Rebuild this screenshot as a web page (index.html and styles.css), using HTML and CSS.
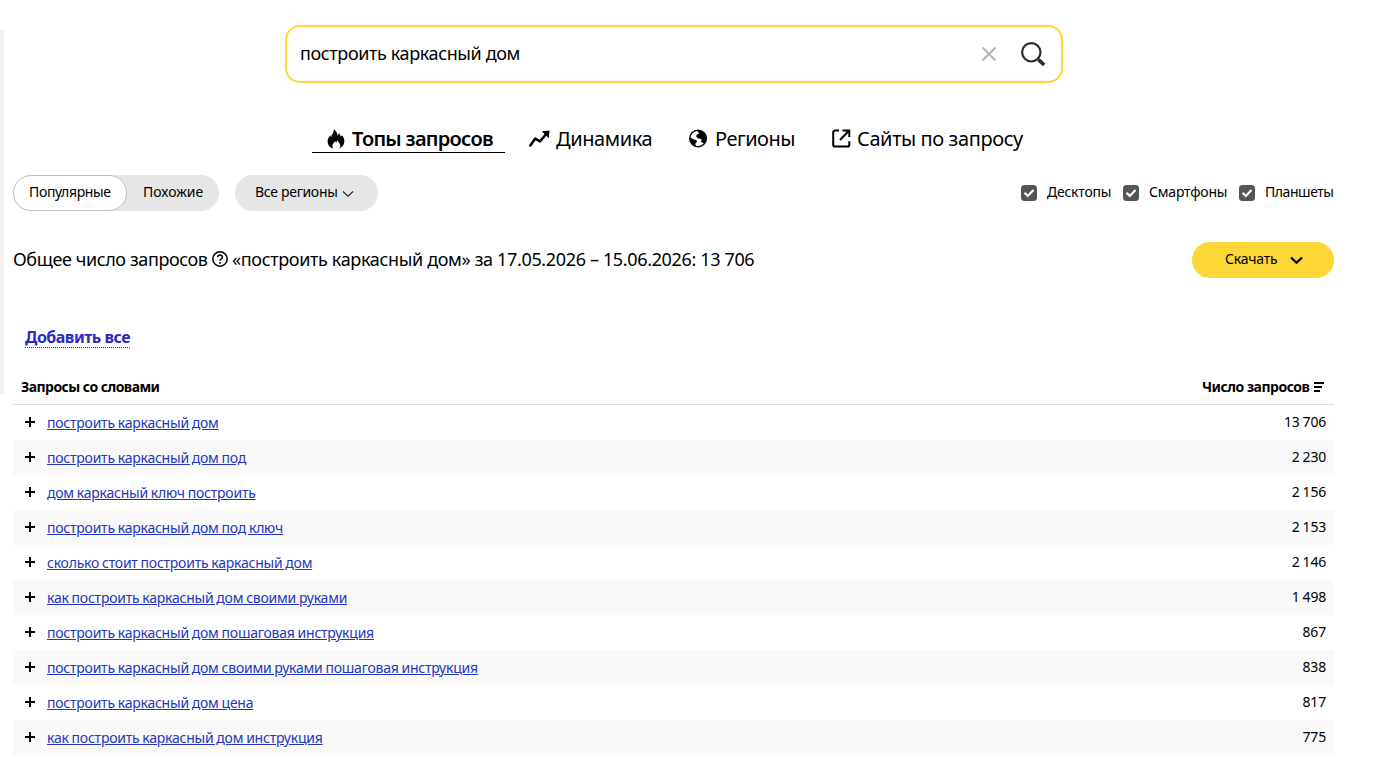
FILE: index.html
```
<!DOCTYPE html>
<html lang="ru">
<head>
<meta charset="utf-8">
<title>Вордстат</title>
<link rel="stylesheet" href="styles.css">
</head>
<body>
<div class="rail"></div>
<main class="page">
  <div class="search">
    <span class="search-text">построить каркасный дом</span>
    <svg class="search-clear" width="16" height="16" viewBox="0 0 16 16"><path d="M1.500 1.500l13 13M14.500 1.500l-13 13" fill="none" stroke="#b3b3b3" stroke-width="1.800"/></svg>
    <svg class="search-icon" width="26" height="26" viewBox="0 0 26 26"><circle cx="11.300" cy="11.300" r="9.200" fill="none" stroke="#2b2b2b" stroke-width="2.200"/><path d="M18.400 18.600l5.800 5.400" stroke="#2b2b2b" stroke-width="3.600"/></svg>
  </div>

  <nav class="tabs">
    <span class="tab tab-active">
      <svg class="tab-icon" width="18" height="20" viewBox="0 0 18 20"><path d="M6.800 0C8.500 1.500 10.300 3.500 10.500 6.600C11.300 6 11.700 5 11.600 4C13 5 13.400 6.200 13.500 7.500C14.200 7.300 14.700 6.800 15 6.200C16.700 8 17.500 10 17.300 12.500C17.200 15.800 15.300 18.300 12.300 19.500C13.300 18.500 13.600 17.200 13.200 15.700C12.700 14 11 13.200 10.500 11C9.800 12 9.500 12.700 9.500 13.700C8.900 13.400 8.600 12.900 8.600 12.300C6.300 13.700 4.500 16.500 6 19.500C2.700 18.500.6 15.800.6 12.300C.6 9.500 2 7.800 3.500 6.200C3.500 7.100 3.700 7.700 4.400 8.200C4.400 5 7.200 3.600 6.800 0Z"/></svg>
      <span class="tab-label label-tops">Топы запросов</span>
    </span>
    <span class="tab">
      <svg class="tab-icon" width="21" height="18" viewBox="0 0 21 18"><path d="M1.300 15.600L6.300 8.600L11 11.400L17 4.300" fill="none" stroke="#000" stroke-width="2.500" stroke-linecap="round" stroke-linejoin="round"/><path d="M12.800 1.300L20.500.5L19.800 8.200Z"/></svg>
      <span class="tab-label label-dyn">Динамика</span>
    </span>
    <span class="tab">
      <svg class="tab-icon globe" width="19" height="19" viewBox="0 0 19 19"><circle cx="9" cy="9.500" r="8.300" fill="#fff" stroke="#000" stroke-width="1.400"/><path d="M7.500 1.300C11 .3 15 2 17 5.200C18.200 8 18 11 16.300 13.500L14.300 14.200L12 12.800L12.600 10.200L9.500 9.600L7.200 7.800L7.700 5.600L9.900 4.700L9.200 3Z"/><path d="M.9 8.200L4 10.200L7.500 11.300L8 13L6.400 14.300L6.700 16.600L5 16.700C2.300 15 .5 12 .9 8.200Z"/></svg>
      <span class="tab-label label-reg">Регионы</span>
    </span>
    <span class="tab">
      <svg class="tab-icon globe" width="19" height="19" viewBox="0 0 19 19"><path d="M7 1.500H3A1.800 1.800 0 0 0 1.200 3.300V15.700A1.800 1.800 0 0 0 3 17.500H15.500A1.800 1.800 0 0 0 17.300 15.700V12.300M10.500 1.500H17.300V8M17 1.800L8 11" fill="none" stroke="#000" stroke-width="2"/></svg>
      <span class="tab-label label-sites">Сайты по запросу</span>
    </span>
  </nav>

  <div class="filters">
    <div class="segmented">
      <span class="segment segment-on"><span class="t-pop">Популярные</span></span>
      <span class="segment"><span class="t-sim">Похожие</span></span>
    </div>
    <div class="region"><span class="t-region">Все регионы</span>
      <svg width="12" height="8" viewBox="0 0 12 8"><path d="M1 1.500l5 4.700l5-4.700" fill="none" stroke="#222" stroke-width="1.200"/></svg>
    </div>
    <div class="devices">
      <span class="device"><svg class="check" width="16" height="16" viewBox="0 0 16 16"><rect width="16" height="16" rx="3.500" fill="#555"/><path d="M3.500 7.700l3.300 3.200l5.700-6" fill="none" stroke="#fff" stroke-width="2.200"/></svg><span class="t-desk">Десктопы</span></span>
      <span class="device"><svg class="check" width="16" height="16" viewBox="0 0 16 16"><rect width="16" height="16" rx="3.500" fill="#555"/><path d="M3.500 7.700l3.300 3.200l5.700-6" fill="none" stroke="#fff" stroke-width="2.200"/></svg><span class="t-phone">Смартфоны</span></span>
      <span class="device"><svg class="check" width="16" height="16" viewBox="0 0 16 16"><rect width="16" height="16" rx="3.500" fill="#555"/><path d="M3.500 7.700l3.300 3.200l5.700-6" fill="none" stroke="#fff" stroke-width="2.200"/></svg><span class="t-tab">Планшеты</span></span>
    </div>
  </div>

  <div class="summary">
    <div class="total">
      <span class="t-total">Общее число запросов</span>
      <svg class="help" width="16" height="16" viewBox="0 0 16 16"><circle cx="8" cy="8" r="7.200" fill="none" stroke="#000" stroke-width="1.500"/><path d="M5.600 6.300C5.700 3.300 10.400 3.400 10.400 6.100C10.400 7.900 8 7.700 8 9.700" fill="none" stroke="#000" stroke-width="1.500"/><circle cx="8" cy="11.900" r="1"/></svg>
      <span class="t-phrase">«построить каркасный дом» за 17.05.2026 – 15.06.2026: 13 706</span>
    </div>
    <div class="download"><span class="t-dl">Скачать</span>
      <svg width="13" height="9" viewBox="0 0 13 9"><path d="M1 1.500l5.500 5.300L12 1.500" fill="none" stroke="#000" stroke-width="2.200"/></svg>
    </div>
  </div>

  <div class="add"><span class="add-all">Добавить все</span></div>

  <div class="table">
    <div class="head"><span class="t-words">Запросы со словами</span>
      <span class="head-count"><span class="t-count">Число запросов</span>
        <svg width="10" height="10" viewBox="0 0 10 10"><path d="M0 1h10M0 5h8M0 9h6" fill="none" stroke="#000" stroke-width="2"/></svg>
      </span>
    </div>
    <div class="row"><i class="plus"></i><a class="query">построить каркасный дом</a><span class="num">13 706</span></div>
    <div class="row"><i class="plus"></i><a class="query">построить каркасный дом под</a><span class="num">2 230</span></div>
    <div class="row"><i class="plus"></i><a class="query">дом каркасный ключ построить</a><span class="num">2 156</span></div>
    <div class="row"><i class="plus"></i><a class="query">построить каркасный дом под ключ</a><span class="num">2 153</span></div>
    <div class="row"><i class="plus"></i><a class="query">сколько стоит построить каркасный дом</a><span class="num">2 146</span></div>
    <div class="row"><i class="plus"></i><a class="query">как построить каркасный дом своими руками</a><span class="num">1 498</span></div>
    <div class="row"><i class="plus"></i><a class="query">построить каркасный дом пошаговая инструкция</a><span class="num">867</span></div>
    <div class="row"><i class="plus"></i><a class="query">построить каркасный дом своими руками пошаговая инструкция</a><span class="num">838</span></div>
    <div class="row"><i class="plus"></i><a class="query">построить каркасный дом цена</a><span class="num">817</span></div>
    <div class="row"><i class="plus"></i><a class="query">как построить каркасный дом инструкция</a><span class="num">775</span></div>
  </div>
</main>
</body>
</html>
```
FILE: styles.css
```
* { box-sizing: border-box; }
body {
  margin: 0;
  height: 758px;
  overflow: hidden;
  display: flex;
  background: #fff;
  color: #000;
  font: 14px/20px "Noto Sans", sans-serif;
  white-space: nowrap;
}
svg { display: block; flex: none; }
.rail { width: 4px; height: 366px; margin-top: 29px; background: #f2f2f2; flex: none; }
.page { width: 1321px; margin-left: 9px; padding-top: 25px; flex: none; }

.search {
  display: flex;
  align-items: center;
  width: 778px;
  height: 58px;
  margin-left: 272px;
  padding: 0 15px 0 13px;
  border: 2px solid #fcd735;
  border-radius: 15px;
}
.search-text { flex: 1; padding-bottom: 2px; font-size: 18px; line-height: 24px; letter-spacing: -0.38px; }
.search-clear { margin-right: 23px; }

.tabs { display: flex; margin: 42px 0 0 299px; height: 28px; font-size: 20px; line-height: 28px; }
.tab { display: flex; align-items: center; height: 28px; letter-spacing: -0.4px; }
.tab-active { width: 193px; padding-left: 15px; border-bottom: 1px solid #000; font-weight: 600; margin-right: 24px; letter-spacing: -0.7px; }
.tab-label { display: block; }
.tab-active .tab-icon { margin-right: 7px; }
.globe { margin-bottom: 2px; }
.label-tops { width: 141px; }
.label-dyn { width: 97px; margin: 0 36px 0 6px; }
.label-reg { width: 80px; margin: 0 37px 0 7px; letter-spacing: -0.5px; }
.label-sites { width: 166px; margin-left: 6px; }

.filters { display: flex; height: 36px; margin-top: 22px; align-items: center; }
.segmented { display: flex; width: 206px; height: 36px; border-radius: 18px; background: #e6e6e6; }
.segment { display: flex; align-items: center; height: 36px; padding: 0 0 2px 16px; }
.segment-on { width: 114px; padding-left: 15px; border: 1px solid #bfbfbf; border-radius: 18px; background: #fff; }
.t-pop { letter-spacing: -0.35px; }
.region { display: flex; align-items: center; width: 143px; height: 36px; margin-left: 16px; padding: 0 0 2px 20px; border-radius: 18px; background: #e6e6e6; }
.t-region { width: 83px; letter-spacing: -0.3px; }
.region svg { margin: 4px 0 0 4px; }
.devices { display: flex; margin-left: auto; gap: 12px; }
.device { display: flex; align-items: center; padding-bottom: 2px; }
.check { margin: 2px 10px 0 0; }
.t-desk { width: 64px; letter-spacing: -0.25px; }
.t-phone { width: 78px; letter-spacing: -0.2px; }
.t-tab { width: 69px; letter-spacing: -0.45px; }

.summary { display: flex; height: 36px; margin-top: 31px; justify-content: space-between; }
.total { display: flex; align-items: center; padding-bottom: 2px; font-size: 18px; }
.t-total { width: 195px; letter-spacing: -0.4px; }
.t-phrase { letter-spacing: -0.35px; }
.help { margin: 0 4px; }
.download { display: flex; align-items: center; width: 142px; height: 36px; padding: 0 0 2px 33px; border-radius: 18px; background: #fcd735; }
.t-dl { width: 52px; letter-spacing: -0.2px; }
.download svg { margin: 2px 0 0 13px; }

.add { height: 92px; padding: 49px 0 0 12px; }
.add-all { display: inline-block; height: 21px; font-size: 16px; line-height: 20px; font-weight: 700; letter-spacing: -0.5px; color: #2b2bc4; border-bottom: 1px dotted #2b2bc4; }

.head { display: flex; justify-content: space-between; height: 35px; padding: 7px 10px 0 8px; border-bottom: 1px solid #dcdcdc; font-weight: 700; letter-spacing: -0.5px; }
.head-count { display: flex; }
.t-words { letter-spacing: -0.55px; }
.t-count { width: 112px; }
.head-count svg { margin-top: 5px; }
.row { display: flex; height: 35px; padding: 7px 8px 0 12px; }
.row:nth-child(odd) { background: #f9f9f9; }
.plus {
  width: 10px; height: 10px; margin: 5px 12px 0 0;
  background: linear-gradient(#000, #000) center / 10px 2px no-repeat, linear-gradient(#000, #000) center / 2px 10px no-repeat;
}
.query { flex: 1; padding-top: 1px; color: #2336bd; text-decoration: underline; letter-spacing: -0.23px; word-spacing: -0.5px; }
.num { letter-spacing: -0.2px; word-spacing: -0.5px; }
```
